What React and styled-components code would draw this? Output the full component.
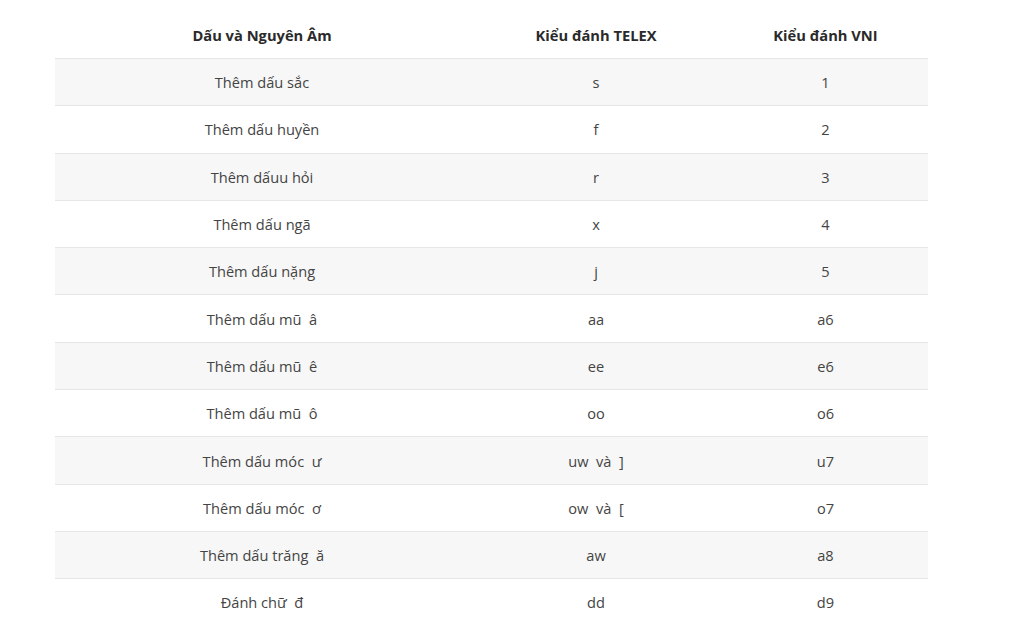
import styled, { createGlobalStyle } from "styled-components"

const GlobalStyle = createGlobalStyle`
  body {
    margin: 0;
    background: #fff;
    font-family: "Open Sans", "Noto Sans", sans-serif;
  }
`

const rows = [
  ["Thêm dấu sắc", "s", "1"],
  ["Thêm dấu huyền", "f", "2"],
  ["Thêm dấuu hỏi", "r", "3"],
  ["Thêm dấu ngã", "x", "4"],
  ["Thêm dấu nặng", "j", "5"],
  ["Thêm dấu mũ  â", "aa", "a6"],
  ["Thêm dấu mũ  ê", "ee", "e6"],
  ["Thêm dấu mũ  ô", "oo", "o6"],
  ["Thêm dấu móc  ư", "uw  và  ]", "u7"],
  ["Thêm dấu móc  ơ", "ow  và  [", "o7"],
  ["Thêm dấu trăng  ă", "aw", "a8"],
  ["Đánh chữ  đ", "dd", "d9"],
]

const Page = styled.div`
  padding: 12px 0 0 55px;
`

const Table = styled.table`
  width: 873px;
  border-collapse: collapse;
  table-layout: fixed;
  font-size: 14.6px;
  color: #444;
`

const Col = styled.col`
  width: ${(props) => props.w}px;
`

const Th = styled.th`
  height: 46px;
  padding: 0;
  font-size: 14.7px;
  font-weight: 700;
  color: #2a2a2a;
  text-align: center;
  vertical-align: middle;
`

const Row = styled.tr`
  background: ${(props) => (props.striped ? "#f7f7f7" : "#fff")};
  border-top: 1px solid #e6e6e6;
`

const Td = styled.td`
  height: 46.3px;
  padding: 0;
  text-align: center;
  vertical-align: middle;
  white-space: pre;
`

const App = () => {
  return (
    <Page>
      <GlobalStyle />
      <Table>
        <colgroup>
          <Col w={414} />
          <Col w={254} />
          <Col w={205} />
        </colgroup>
        <thead>
          <tr>
            <Th>Dấu và Nguyên Âm</Th>
            <Th>Kiểu đánh TELEX</Th>
            <Th>Kiểu đánh VNI</Th>
          </tr>
        </thead>
        <tbody>
          {rows.map((r, i) => (
            <Row key={i} striped={i % 2 === 0}>
              <Td>{r[0]}</Td>
              <Td>{r[1]}</Td>
              <Td>{r[2]}</Td>
            </Row>
          ))}
        </tbody>
      </Table>
    </Page>
  )
}

export default App
